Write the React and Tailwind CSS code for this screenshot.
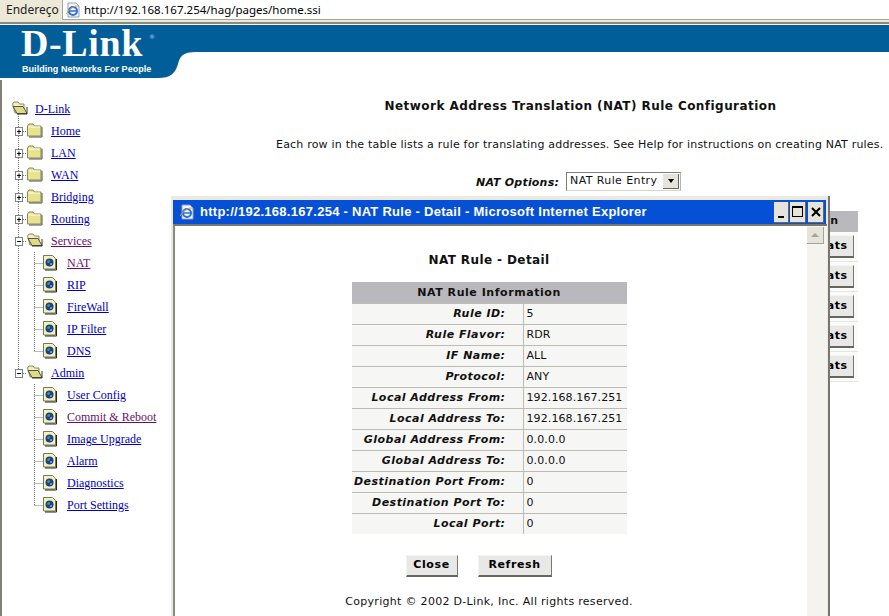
const treeItems = [
    { label: 'Home', kind: 'folder', trunk: true },
    { label: 'LAN', kind: 'folder', trunk: true },
    { label: 'WAN', kind: 'folder', trunk: true },
    { label: 'Bridging', kind: 'folder', trunk: true },
    { label: 'Routing', kind: 'folder', trunk: true },
    { label: 'Services', kind: 'open', trunk: true, visited: true },
    { label: 'NAT', kind: 'page', trunk: true, visited: true },
    { label: 'RIP', kind: 'page', trunk: true },
    { label: 'FireWall', kind: 'page', trunk: true },
    { label: 'IP Filter', kind: 'page', trunk: true },
    { label: 'DNS', kind: 'page', trunk: true, last: true },
    { label: 'Admin', kind: 'open', end: true },
    { label: 'User Config', kind: 'page' },
    { label: 'Commit & Reboot', kind: 'page', visited: true },
    { label: 'Image Upgrade', kind: 'page' },
    { label: 'Alarm', kind: 'page' },
    { label: 'Diagnostics', kind: 'page' },
    { label: 'Port Settings', kind: 'page', last: true },
];

const ruleRows = [
    ['Rule ID:', '5'],
    ['Rule Flavor:', 'RDR'],
    ['IF Name:', 'ALL'],
    ['Protocol:', 'ANY'],
    ['Local Address From:', '192.168.167.251'],
    ['Local Address To:', '192.168.167.251'],
    ['Global Address From:', '0.0.0.0'],
    ['Global Address To:', '0.0.0.0'],
    ['Destination Port From:', '0'],
    ['Destination Port To:', '0'],
    ['Local Port:', '0'],
];

function ClosedFolder({ x }) {
    return (
        <g transform={`translate(${x} 3)`}>
            <path d="M0.5 3 L2 1 H6 L7.5 3 H14 V13 H0.5 Z" fill="#e8e38f" stroke="#8a8a5a" />
            <path d="M1.5 4 H13" stroke="#fffff0" />
            <path d="M15 4 V14 H2" stroke="#55554a" fill="none" />
        </g>
    );
}

function OpenFolder({ x }) {
    return (
        <g transform={`translate(${x} 3)`}>
            <path d="M0.5 3 L2 1 H6 L7.5 3 H12 V12 H3 Z" fill="#f2efc4" stroke="#8a8a5a" />
            <path d="M1 5.5 H11 L15 12.5 H5 Z" fill="#e0da84" stroke="#55554a" />
            <path d="M15 6 V13 H5" stroke="#33332a" fill="none" />
        </g>
    );
}

function PageIcon({ x }) {
    return (
        <g transform={`translate(${x} 3)`}>
            <path d="M0.5 0.5 H9.5 L12.5 3.5 V14 H0.5 Z" fill="#f5f1b8" stroke="#77775a" />
            <path d="M13.5 4 V15 H2" stroke="#222222" fill="none" />
            <circle cx="6.5" cy="7.5" r="4" fill="#1c3f94" />
            <path d="M4 6.5 Q6 4 7.5 6 L6 8 L4.5 8 Z" fill="#3f9a52" />
            <circle cx="8" cy="9" r="1" fill="#7fb0e8" />
        </g>
    );
}

function TreeRow({ item }) {
    const isChild = item.kind === 'page';
    const linkColor = item.visited ? 'text-[#6b0f6b]' : 'text-[#0000c0]';
    return (
        <div className="flex h-[22px] items-center">
            <svg width={isChild ? 67 : 51} height="22" className="shrink-0">
                {item.trunk && <path d="M18.5 0 V22" stroke="#777" strokeDasharray="1 1" />}
                {item.end && <path d="M18.5 0 V11" stroke="#777" strokeDasharray="1 1" />}
                {isChild ? (
                    <>
                        <path d={item.last ? 'M34.5 0 V11' : 'M34.5 0 V22'} stroke="#777" strokeDasharray="1 1" />
                        <path d="M34.5 11.5 H43" stroke="#777" strokeDasharray="1 1" />
                        <PageIcon x={43} />
                    </>
                ) : (
                    <>
                        <path d="M23 11.5 H27" stroke="#777" strokeDasharray="1 1" />
                        <rect x="15.5" y="7.5" width="7" height="8" fill="#fff" stroke="#808080" />
                        <path d="M17 11.5 H21" stroke="#000" />
                        {item.kind === 'folder' && <path d="M19 9.5 V14" stroke="#000" />}
                        {item.kind === 'folder' ? <ClosedFolder x={27} /> : <OpenFolder x={27} />}
                    </>
                )}
            </svg>
            <a className={`underline whitespace-nowrap ${linkColor}`}>{item.label}</a>
        </div>
    );
}

function RaisedButton({ children, className }) {
    return (
        <div
            className={`flex items-center justify-center bg-[#e8e8e6] border border-t-[#f4f4f2] border-l-[#f4f4f2] border-r-[#77776f] border-b-[#66665f] border-b-2 font-bold tracking-[0.6px] text-[11px] text-black ${className}`}
        >
            {children}
        </div>
    );
}

function IeIcon() {
    return (
        <svg width="16" height="16" viewBox="0 0 16 16" className="shrink-0">
            <path d="M3 1 H11 L14 4 V15 H3 Z" fill="#f3f6fb" stroke="#8aa0c0" />
            <circle cx="8" cy="9" r="4" fill="none" stroke="#2c6fd6" strokeWidth="2" />
            <path d="M5 9 H11" stroke="#2c6fd6" strokeWidth="1.5" />
            <path d="M1 12 Q7 3 14 4" fill="none" stroke="#e0a030" />
        </svg>
    );
}

function PopupWindow() {
    return (
        <div className="absolute left-[171px] top-[196px] flex h-[420px] w-[659px] flex-col border-r-2 border-r-[#77776f] bg-[#eceae0] pl-px pr-px pt-1">
            <div className="ml-px mr-px flex h-[24px] shrink-0 items-center bg-[#0650d6] pl-[6px] pr-[2px]">
                <IeIcon />
                <span className="ml-[5px] whitespace-nowrap font-['Liberation_Sans',sans-serif] text-[13px] font-bold tracking-[0.27px] text-white">
                    http://192.168.167.254 - NAT Rule - Detail - Microsoft Internet Explorer
                </span>
                <div className="ml-auto flex items-center gap-px">
                    <div className="flex h-[21px] w-[15px] items-end justify-center border-r border-b border-r-[#66665f] border-b-[#66665f] bg-[#e6e4da] pb-[4px]">
                        <div className="h-[2px] w-[6px] bg-black" />
                    </div>
                    <div className="flex h-[21px] w-[16px] items-center justify-center border-r border-b border-r-[#66665f] border-b-[#66665f] bg-[#e6e4da]">
                        <div className="h-[11px] w-[11px] border border-t-2 border-black" />
                    </div>
                    <div className="ml-px flex h-[21px] w-[16px] items-center justify-center border-r border-b border-r-[#66665f] border-b-[#66665f] bg-[#e6e4da]">
                        <svg width="10" height="10" viewBox="0 0 10 10">
                            <path d="M1 1 L9 9 M9 1 L1 9" stroke="#000" strokeWidth="2" />
                        </svg>
                    </div>
                </div>
            </div>
            <div className="ml-px flex min-h-0 flex-1 border-l-2 border-t-2 border-l-[#8c8a80] border-t-[#77776f] bg-white">
                <div className="flex min-w-0 flex-1 flex-col items-center pr-[4px]">
                    <h2 className="mt-[25px] text-[12px] font-bold leading-[18px] tracking-[0.4px]">NAT Rule - Detail</h2>
                    <div className="mt-[13px] w-[275px]">
                        <div className="flex h-[21px] items-center justify-center bg-[#b9b9bd] pt-px text-[11px] font-bold tracking-[0.55px]">
                            NAT Rule Information
                        </div>
                        {ruleRows.map(([label, value]) => (
                            <div key={label} className="grid h-[21px] grid-cols-[172px_1fr] border-t border-[#bdbcb2] bg-[#f6f6f4] text-[11px]">
                                <div className="flex items-center justify-end whitespace-nowrap border-r border-[#bdbcb2] pr-[17px] font-bold italic tracking-[0.48px]">
                                    {label}
                                </div>
                                <div className="flex items-center pl-[3px] tracking-[0.1px]">{value}</div>
                            </div>
                        ))}
                    </div>
                    <div className="mr-[21px] mt-[21px] flex gap-[20px]">
                        <RaisedButton className="h-[22px] w-[52px]">Close</RaisedButton>
                        <RaisedButton className="h-[22px] w-[74px]">Refresh</RaisedButton>
                    </div>
                    <p className="mt-[17px] whitespace-nowrap text-[11px] tracking-[0.3px]">
                        Copyright © 2002 D-Link, Inc. All rights reserved.
                    </p>
                </div>
                <div className="w-[20px] shrink-0 bg-[#f5f3ee] pt-px">
                    <div className="flex h-[17px] w-[17px] items-center justify-center bg-[#e6e4da] border-r border-b border-r-[#a5a39a] border-b-[#a5a39a]">
                        <div className="h-0 w-0 border-x-[4px] border-b-[4px] border-x-transparent border-b-[#a5a39a]" />
                    </div>
                </div>
            </div>
        </div>
    );
}

export default function App() {
    return (
        <div className="relative h-[616px] w-[889px] overflow-hidden bg-white font-['DejaVu_Sans',sans-serif] text-[#111]">
            <div className="flex h-[24px] items-start border-b-2 border-b-[#8c8a80] bg-[#ece9d8] font-['Noto_Sans',sans-serif]">
                <span className="w-[62px] pl-[6px] pt-[2px] text-[12px] leading-[16px] text-[#222]">Endereço</span>
                <div className="flex h-[20px] flex-1 items-center border-l border-b border-[#a5a39a] bg-white pl-[2px]">
                    <IeIcon />
                    <span className="ml-[3px] text-[11.5px] text-black">
                        http://192.168.167.254/hag/pages/home.ssi
                    </span>
                </div>
            </div>

            <div className="relative h-[56px]">
                <svg width="889" height="56" className="absolute inset-0">
                    <path d="M0 1 H889 V28 H196 C183 28 180 32 178 40 C175 50 170 54 158 54 H0 Z" fill="#025e98" />
                </svg>
                <div className="absolute left-[21px] top-[2px] font-['Liberation_Serif',serif] text-[38px] font-bold leading-[34px] tracking-[0.6px] text-white">
                    D-Link
                </div>
                <div className="absolute left-[149px] top-[9px] text-[6px] leading-[8px] text-[#b8d2e4]">®</div>
                <div className="absolute left-[22px] top-[40px] whitespace-nowrap font-['Liberation_Sans',sans-serif] text-[9px] font-bold leading-[10px] tracking-[0.05px] text-white">
                    Building Networks For People
                </div>
            </div>

            <div className="flex h-[536px] border-l-2 border-l-[#808078]">
                <nav className="-ml-[2px] w-[272px] shrink-0 pt-[18px] font-['Liberation_Serif',serif] text-[12px]">
                    <div className="flex h-[22px] items-center">
                        <svg width="35" height="22" className="shrink-0">
                            <path d="M18.5 16 V22" stroke="#777" strokeDasharray="1 1" />
                            <OpenFolder x={12} />
                        </svg>
                        <a className="text-[#0000c0] underline">D-Link</a>
                    </div>
                    {treeItems.map((item) => (
                        <TreeRow key={item.label} item={item} />
                    ))}
                </nav>

                <main className="w-[617px] shrink-0">
                    <h1 className="mt-[16px] text-center text-[12px] font-bold leading-[20px] tracking-[0.45px]">
                        Network Address Translation (NAT) Rule Configuration
                    </h1>
                    <p className="mt-[20px] whitespace-nowrap pl-[4px] text-[11px] leading-[18px] tracking-[0.2px]">
                        Each row in the table lists a rule for translating addresses. See Help for instructions on creating NAT rules.
                    </p>
                    <div className="mt-[18px] flex items-start pl-[204px]">
                        <span className="mt-[3px] text-[11px] font-bold italic leading-[16px] tracking-[0.2px]">NAT Options:</span>
                        <div className="ml-[7px] flex h-[19px] w-[115px] items-center border border-t-[#808078] border-l-[#808078] border-r-[#b5b3a8] border-b-[#d8d6cc] bg-white pl-[3px] pr-px text-[11px] tracking-[0.4px]">
                            NAT Rule Entry
                            <div className="ml-auto flex h-[15px] w-[16px] items-center justify-center border-r border-b border-r-[#66665f] border-b-[#66665f] bg-[#e6e4da]">
                                <div className="h-0 w-0 border-x-[3px] border-t-[4px] border-x-transparent border-t-black" />
                            </div>
                        </div>
                    </div>
                    <div className="ml-auto mr-[31px] mt-[20px] w-[68px]">
                        <div className="flex h-[21px] items-center bg-[#b9b9bd] pb-px pl-[6px] text-[11px] font-bold tracking-[0.55px]">
                            Action
                        </div>
                        {[0, 1, 2, 3, 4].map((row) => (
                            <div key={row} className="flex h-[30px] items-center justify-end border-b border-[#e6e6e0] bg-[#fbfbf9] pr-[4px]">
                                <RaisedButton className="h-[23px] w-[48px]">Stats</RaisedButton>
                            </div>
                        ))}
                    </div>
                </main>
            </div>

            <PopupWindow />
        </div>
    );
}
